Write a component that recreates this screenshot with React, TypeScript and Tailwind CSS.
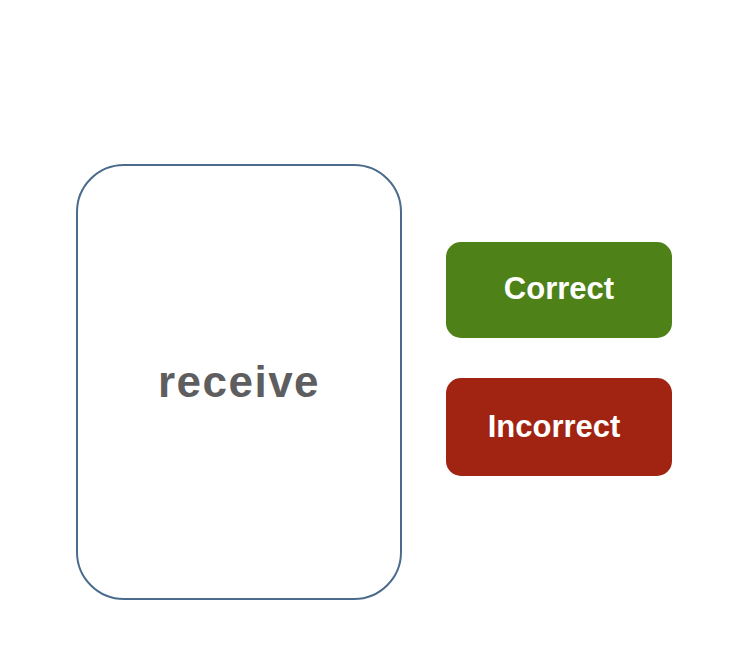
export default function App() {
  return (
    <div className="min-h-[650px] w-full bg-white font-['Liberation_Sans',Arial,sans-serif]">
      <div className="flex items-start gap-[44px] pl-[76px] pt-[164px]">
        {/* Flash card */}
        <div className="flex h-[436px] w-[326px] items-center justify-center rounded-[48px] border-2 border-[#4a6b8c]">
          <span className="text-[44px] font-bold tracking-[1.5px] text-[#5e5e61]">receive</span>
        </div>

        {/* Answer buttons */}
        <div className="mt-[78px] flex flex-col gap-[40px]">
          <button className="flex h-[96px] w-[226px] items-center justify-center rounded-[15px] bg-[#4e8219] pb-[2px] text-[31px] font-bold text-white">
            Correct
          </button>
          <button className="flex h-[98px] w-[226px] items-center justify-center rounded-[15px] bg-[#a12312] pr-[10px] text-[31px] font-bold text-white">
            Incorrect
          </button>
        </div>
      </div>
    </div>
  );
}
